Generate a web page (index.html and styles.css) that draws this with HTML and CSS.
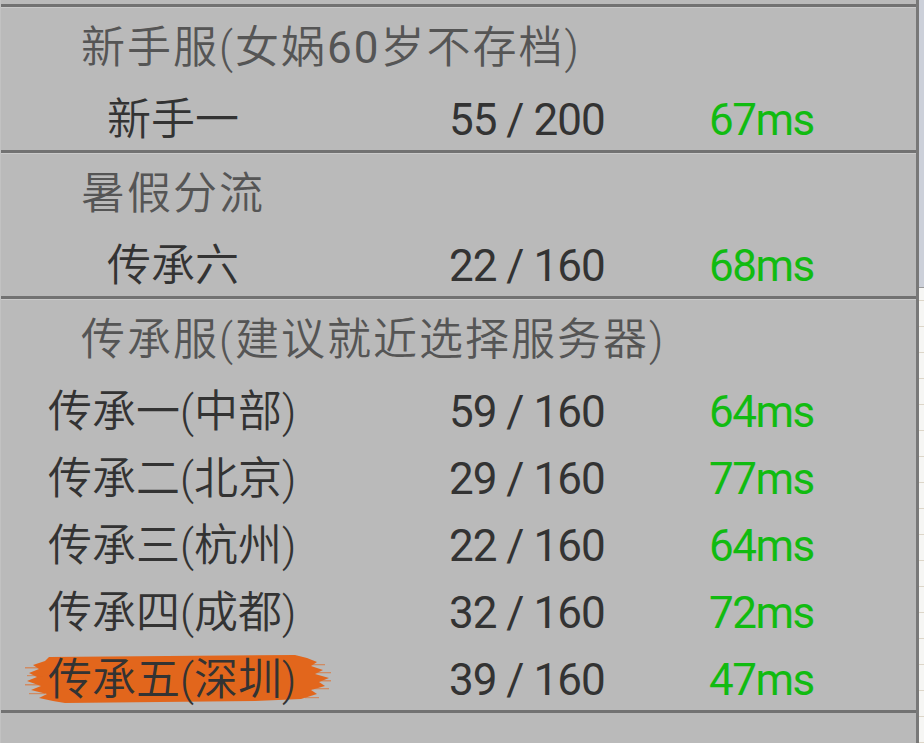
FILE: index.html
```html
<!DOCTYPE html>
<html lang="zh-CN">
<head>
<meta charset="utf-8">
<title>服务器列表</title>
<link rel="stylesheet" href="styles.css">
</head>
<body>
<div class="screen">
  <div class="panel">
    <section class="group">
      <div class="group-title">新手服(女娲<span class="num">60</span>岁不存档)</div>
      <div class="row">
        <span class="name name-indent">新手一</span>
        <span class="count">55 / 200</span>
        <span class="ping">67ms</span>
      </div>
    </section>
    <section class="group">
      <div class="group-title">暑假分流</div>
      <div class="row">
        <span class="name name-indent">传承六</span>
        <span class="count">22 / 160</span>
        <span class="ping">68ms</span>
      </div>
    </section>
    <section class="group">
      <div class="group-title">传承服(建议就近选择服务器)</div>
      <div class="row">
        <span class="name">传承一(中部)</span>
        <span class="count">59 / 160</span>
        <span class="ping">64ms</span>
      </div>
      <div class="row">
        <span class="name">传承二(北京)</span>
        <span class="count">29 / 160</span>
        <span class="ping">77ms</span>
      </div>
      <div class="row">
        <span class="name">传承三(杭州)</span>
        <span class="count">22 / 160</span>
        <span class="ping">64ms</span>
      </div>
      <div class="row">
        <span class="name">传承四(成都)</span>
        <span class="count">32 / 160</span>
        <span class="ping">72ms</span>
      </div>
      <div class="row">
        <span class="name name-selected">
          <svg class="brush" viewBox="0 0 306 48" preserveAspectRatio="none" aria-hidden="true">
            <path fill="#e2661c" d="M24 2 L270 0 L282 3 L292 7 L286 11 L298 15 L290 19 L304 23 L294 27 L300 31 L286 35 L292 39 L276 44 L230 46 L40 48 L28 46 L14 43 L22 39 L6 35 L16 31 L2 26 L12 22 L4 18 L14 14 L8 10 L20 6 Z"/>
            <g fill="#e2661c" opacity="0.55">
              <rect x="0" y="12" width="20" height="1.5"/>
              <rect x="2" y="20" width="16" height="1.2"/>
              <rect x="0" y="29" width="18" height="1.5"/>
              <rect x="4" y="38" width="16" height="1.2"/>
              <rect x="286" y="9" width="14" height="1.3"/>
              <rect x="290" y="17" width="16" height="1.3"/>
              <rect x="294" y="25" width="12" height="1.5"/>
              <rect x="288" y="33" width="16" height="1.3"/>
              <rect x="280" y="42" width="14" height="1.2"/>
            </g>
          </svg>
          <span class="name-text">传承五(深圳)</span>
        </span>
        <span class="count">39 / 160</span>
        <span class="ping">47ms</span>
      </div>
    </section>
    <div class="tail"></div>
  </div>
  <div class="scroll-edge"></div>
  <div class="side-strip">
    <div class="strip-top"></div>
    <div class="strip-bottom"></div>
  </div>
</div>
</body>
</html>
```

FILE: styles.css
```css
html, body {
  margin: 0;
  padding: 0;
  width: 924px;
  height: 743px;
  overflow: hidden;
  background: #bbbbbb;
}

.screen {
  display: flex;
  width: 924px;
  height: 743px;
  font-family: Roboto, "Noto Sans CJK SC", sans-serif;
  font-weight: 350;
}

.panel {
  width: 916px;
  height: 743px;
  padding-top: 4px;
  box-sizing: border-box;
  background: #bababa;
  border-left: 1px solid #c2c2c2;
  display: flex;
  flex-direction: column;
}

.group {
  border-top: 3px solid #727272;
  box-shadow: inset 0 1px 0 #cacaca;
  padding-top: 11px;
  display: flex;
  flex-direction: column;
  gap: 7px;
}

.group-title {
  height: 60px;
  line-height: 60px;
  padding-left: 80px;
  margin-bottom: 5px;
  font-size: 44px;
  letter-spacing: 2px;
  color: #555555;
  white-space: nowrap;
}

.num {
  font-weight: 400;
}

.row {
  height: 60px;
  display: grid;
  grid-template-columns: 448px 260px 1fr;
  align-items: center;
  font-size: 44px;
  line-height: 60px;
  white-space: nowrap;
}

.name {
  padding-left: 47px;
  color: #333333;
}

.name-indent {
  padding-left: 106px;
}

.name-selected {
  position: relative;
}

.name-text {
  position: relative;
}

.brush {
  position: absolute;
  left: 24px;
  top: 5px;
  width: 306px;
  height: 48px;
}

.count {
  color: #333333;
  font-weight: 400;
  letter-spacing: -1px;
}

.ping {
  color: #11bb11;
  font-weight: 400;
  letter-spacing: -1.5px;
}

.tail {
  flex: 1;
  border-top: 3px solid #727272;
}

.scroll-edge {
  width: 3px;
  height: 743px;
  background: #787878;
}

.side-strip {
  width: 5px;
  height: 743px;
  display: flex;
  flex-direction: column;
}

.strip-top {
  height: 287px;
  background: #ccd0d9;
  border-bottom: 1px solid #9a9a9a;
}

.strip-bottom {
  flex: 1;
  background-color: #f6f6f4;
  background-image: repeating-linear-gradient(to bottom, transparent 0, transparent 12px, #ddd6c8 12px, #ddd6c8 13px, transparent 13px, transparent 26px);
}
```
